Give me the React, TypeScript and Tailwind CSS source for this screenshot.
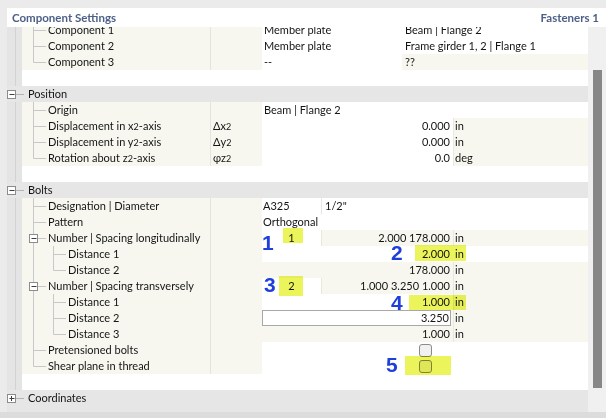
import React from "react";

const LINE = "#c8c8c8";

function Box({ x, y, plus }: { x: number; y: number; plus?: boolean }) {
  return (
    <g>
      <rect x={x} y={y} width={8} height={8} fill="#ffffff" stroke="#8c8c8c" />
      <line x1={x + 2} y1={y + 4} x2={x + 7} y2={y + 4} stroke="#3c3c3c" />
      {plus && <line x1={x + 4} y1={y + 1.5} x2={x + 4} y2={y + 6.5} stroke="#3c3c3c" />}
    </g>
  );
}

function Guide({ level, last, expander }: { level: 1 | 2; last?: boolean; expander?: boolean }) {
  const w = level === 1 ? 26 : 46;
  return (
    <svg width={w} height={16} className="shrink-0">
      <line x1={11.5} y1={0} x2={11.5} y2={level === 1 && last ? 8.5 : 16} stroke={LINE} />
      {level === 1 && <line x1={11.5} y1={8.5} x2={24} y2={8.5} stroke={LINE} />}
      {level === 2 && (
        <>
          <line x1={31.5} y1={0} x2={31.5} y2={last ? 8.5 : 16} stroke={LINE} />
          <line x1={31.5} y1={8.5} x2={44} y2={8.5} stroke={LINE} />
        </>
      )}
      {expander && <Box x={7.5} y={4.5} />}
    </svg>
  );
}

function Gutter() {
  return (
    <div className="flex w-[15px] shrink-0 bg-[#e4e4e4]">
      <div className="w-[8px]" />
      <div className="w-px bg-[#d2d2d2]" />
    </div>
  );
}

function Row({
  label,
  level = 1,
  last,
  expander,
  symbol,
  children,
}: {
  label: React.ReactNode;
  level?: 1 | 2;
  last?: boolean;
  expander?: boolean;
  symbol?: React.ReactNode;
  children?: React.ReactNode;
}) {
  return (
    <div className="flex h-4">
      <Gutter />
      <div className="flex w-[189px] shrink-0 items-center border-r border-[#e4e4de] bg-[#f7f7f0]">
        <Guide level={level} last={last} expander={expander} />
        <span className="whitespace-nowrap">{label}</span>
      </div>
      <div className="flex w-[51px] shrink-0 items-center bg-[#f7f7f0] pl-[2px]">{symbol}</div>
      <div className="flex flex-1 items-center">{children}</div>
    </div>
  );
}

function Header({ label, plus }: { label: string; plus?: boolean }) {
  return (
    <div className="flex h-4 items-center bg-[#e6e6e6]">
      <svg width={21} height={16} className="shrink-0">
        <Box x={0.5} y={4.5} plus={plus} />
        <line x1={9} y1={8.5} x2={17} y2={8.5} stroke="#b4b4b4" />
      </svg>
      <span>{label}</span>
    </div>
  );
}

function Blank() {
  return (
    <div className="flex h-4">
      <Gutter />
      <div className="flex-1 bg-white" />
    </div>
  );
}

function Sub({ children }: { children: React.ReactNode }) {
  return <span className="text-[9px] leading-none">{children}</span>;
}

function Checkbox() {
  return <div className="h-[13px] w-[13px] rounded-[3px] border border-[#8a8a8a] bg-[#f1f1f1]" />;
}

export default function App() {
  return (
    <div className="relative h-[418px] w-[606px] overflow-hidden bg-[#ebebeb] font-['Lato',sans-serif] text-[11px] leading-4 text-[#141414]">
      <div className="ml-[7px] mt-[8px] flex h-[19px] items-center justify-between bg-white pl-[5px] pr-[7px] text-[11.5px] font-bold text-[#4d6088]">
        <span>Component Settings</span>
        <span>Fasteners 1</span>
      </div>

      <div className="flex h-[385px]">
        <div className="w-[7px] shrink-0" />
        <div className="w-[581px] shrink-0 overflow-hidden bg-[#e6e6e6]">
          <div className="-mt-[5px]">
            <Row label="Component 1">
              <div className="h-4 w-[140px] bg-white pl-[2px]">Member plate</div>
              <div className="h-4 flex-1 bg-white pl-[3px]">Beam | Flange 2</div>
            </Row>
            <Row label="Component 2">
              <div className="h-4 w-[140px] bg-white pl-[2px]">Member plate</div>
              <div className="h-4 flex-1 bg-white pl-[3px]">Frame girder 1, 2 | Flange 1</div>
            </Row>
            <Row label="Component 3" last>
              <div className="h-4 w-[140px] bg-white pl-[2px]">--</div>
              <div className="h-4 flex-1 bg-[#f7f7f0] pl-[3px]">??</div>
            </Row>
            <Blank />

            <Header label="Position" />
            <Row label="Origin">
              <div className="h-4 flex-1 bg-white pl-[2px]">Beam | Flange 2</div>
            </Row>
            <Row
              label={<>Displacement in x<Sub>2</Sub>-axis</>}
              symbol={<>Δx<Sub>2</Sub></>}
            >
              <div className="h-4 w-[191px] bg-white pr-[3px] text-right">0.000</div>
              <div className="h-4 flex-1 border-l border-[#e8e8e2] bg-[#f7f7f0] pl-[1px]">in</div>
            </Row>
            <Row
              label={<>Displacement in y<Sub>2</Sub>-axis</>}
              symbol={<>Δy<Sub>2</Sub></>}
            >
              <div className="h-4 w-[191px] bg-white pr-[3px] text-right">0.000</div>
              <div className="h-4 flex-1 border-l border-[#e8e8e2] bg-[#f7f7f0] pl-[1px]">in</div>
            </Row>
            <Row
              label={<>Rotation about z<Sub>2</Sub>-axis</>}
              symbol={<>φz<Sub>2</Sub></>}
              last
            >
              <div className="h-4 w-[191px] bg-white pr-[3px] text-right">0.0</div>
              <div className="h-4 flex-1 border-l border-[#e8e8e2] bg-[#f7f7f0] pl-[1px]">deg</div>
            </Row>
            <Blank />

            <Header label="Bolts" />
            <Row label="Designation | Diameter">
              <div className="h-4 w-[60px] border-r border-[#e8e8e2] bg-white pl-[1px]">A325</div>
              <div className="h-4 flex-1 bg-white pl-[3px]">1/2"</div>
            </Row>
            <Row label="Pattern">
              <div className="h-4 flex-1 bg-white pl-[1px]">Orthogonal</div>
            </Row>
            <Row label="Number | Spacing longitudinally" expander>
              <div className="h-4 w-[60px] border-r border-[#e8e8e2] bg-white text-center">1</div>
              <div className="h-4 w-[131px] bg-[#f7f7f0] pr-[3px] text-right">2.000 178.000</div>
              <div className="h-4 flex-1 border-l border-[#e8e8e2] bg-[#f7f7f0] pl-[1px]">in</div>
            </Row>
            <Row label="Distance 1" level={2}>
              <div className="h-4 w-[191px] bg-white pr-[3px] text-right">2.000</div>
              <div className="h-4 flex-1 bg-white pl-[2px]">in</div>
            </Row>
            <Row label="Distance 2" level={2} last>
              <div className="h-4 w-[191px] bg-[#f7f7f0] pr-[3px] text-right">178.000</div>
              <div className="h-4 flex-1 border-l border-[#e8e8e2] bg-[#f7f7f0] pl-[1px]">in</div>
            </Row>
            <Row label="Number | Spacing transversely" expander>
              <div className="h-4 w-[60px] border-r border-[#e8e8e2] bg-white text-center">2</div>
              <div className="h-4 w-[131px] bg-[#f7f7f0] pr-[3px] text-right">1.000 3.250 1.000</div>
              <div className="h-4 flex-1 border-l border-[#e8e8e2] bg-[#f7f7f0] pl-[1px]">in</div>
            </Row>
            <Row label="Distance 1" level={2}>
              <div className="h-4 w-[191px] bg-white pr-[3px] text-right">1.000</div>
              <div className="h-4 flex-1 border-l border-[#e8e8e2] bg-[#f7f7f0] pl-[1px]">in</div>
            </Row>
            <Row label="Distance 2" level={2}>
              <div className="h-4 w-[191px] bg-[#f7f7f0]">
                <div className="h-4 w-[189px] border border-[#a8a8a8] bg-white pr-[1px] text-right leading-[14px]">3.250</div>
              </div>
              <div className="h-4 flex-1 border-l border-[#e8e8e2] bg-[#f7f7f0] pl-[1px]">in</div>
            </Row>
            <Row label="Distance 3" level={2} last>
              <div className="h-4 w-[191px] bg-[#f7f7f0] pr-[3px] text-right">1.000</div>
              <div className="h-4 flex-1 border-l border-[#e8e8e2] bg-[#f7f7f0] pl-[1px]">in</div>
            </Row>
            <Row label="Pretensioned bolts">
              <div className="flex h-4 flex-1 items-center justify-center bg-white">
                <Checkbox />
              </div>
            </Row>
            <Row label="Shear plane in thread" last>
              <div className="flex h-4 flex-1 items-center justify-center bg-white">
                <Checkbox />
              </div>
            </Row>
            <Blank />

            <Header label="Coordinates" plus />
          </div>
        </div>
        <div className="flex-1 bg-[#f0f0f0] pl-[5px] pt-[43px]">
          <div className="h-[318px] w-[9px] bg-[#878787]" />
        </div>
      </div>
      <div className="h-[6px] bg-[#dcdcdc]" />

      {/* yellow highlights */}
      <div className="absolute left-[283px] top-[228px] h-[15px] w-[20px] bg-[#ecf45c] mix-blend-multiply" />
      <div className="absolute left-[415px] top-[245px] h-[16px] w-[51px] bg-[#ecf45c] mix-blend-multiply" />
      <div className="absolute left-[279px] top-[276px] h-[20px] w-[24px] bg-[#ecf45c] mix-blend-multiply" />
      <div className="absolute left-[409px] top-[295px] h-[15px] w-[57px] bg-[#ecf45c] mix-blend-multiply" />
      <div className="absolute left-[405px] top-[356px] h-[19px] w-[46px] bg-[#ecf45c] mix-blend-multiply" />

      {/* blue markers */}
      <div className="absolute left-[262px] top-[232px] font-['Liberation_Sans',sans-serif] text-[21px] font-bold leading-[21px] text-[#1f3fdc]">1</div>
      <div className="absolute left-[391px] top-[242px] font-['Liberation_Sans',sans-serif] text-[21px] font-bold leading-[21px] text-[#1f3fdc]">2</div>
      <div className="absolute left-[264px] top-[274px] font-['Liberation_Sans',sans-serif] text-[21px] font-bold leading-[21px] text-[#1f3fdc]">3</div>
      <div className="absolute left-[391px] top-[292px] font-['Liberation_Sans',sans-serif] text-[21px] font-bold leading-[21px] text-[#1f3fdc]">4</div>
      <div className="absolute left-[386px] top-[354px] font-['Liberation_Sans',sans-serif] text-[21px] font-bold leading-[21px] text-[#1f3fdc]">5</div>
    </div>
  );
}
